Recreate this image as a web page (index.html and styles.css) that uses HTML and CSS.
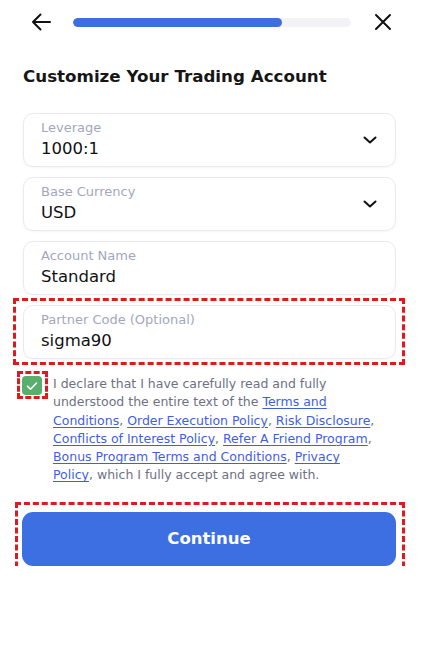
FILE: index.html
```html
<!DOCTYPE html>
<html>
<head>
<meta charset="utf-8">
<link rel="stylesheet" href="styles.css">
</head>
<body>
<div class="page">
  <header class="topbar">
    <svg class="icon back" width="20" height="18" viewBox="0 0 20 18"><path d="M19 9H2M9.5 1.5L2 9l7.5 7.5" fill="none" stroke="#111" stroke-width="2" stroke-linecap="round" stroke-linejoin="round"/></svg>
    <div class="progress"><div class="progress-fill" style="width:75%"></div></div>
    <svg class="icon close" width="18" height="18" viewBox="0 0 18 18"><path d="M2 2l14 14M16 2L2 16" fill="none" stroke="#111" stroke-width="2" stroke-linecap="round"/></svg>
  </header>
  <h1 class="title">Customize Your Trading Account</h1>
  <div class="fields">
    <div class="field">
      <div class="field-text"><span class="label">Leverage</span><span class="value">1000:1</span></div>
      <svg class="chev" width="14" height="8" viewBox="0 0 14 8"><path d="M1.5 1.5L7 6.5l5.5-5" fill="none" stroke="#111" stroke-width="2" stroke-linecap="round" stroke-linejoin="round"/></svg>
    </div>
    <div class="field">
      <div class="field-text"><span class="label">Base Currency</span><span class="value">USD</span></div>
      <svg class="chev" width="14" height="8" viewBox="0 0 14 8"><path d="M1.5 1.5L7 6.5l5.5-5" fill="none" stroke="#111" stroke-width="2" stroke-linecap="round" stroke-linejoin="round"/></svg>
    </div>
    <div class="field">
      <div class="field-text"><span class="label">Account Name</span><span class="value">Standard</span></div>
    </div>
    <div class="field marked mark-field">
      <div class="field-text"><span class="label">Partner Code (Optional)</span><span class="value">sigma90</span></div>
    </div>
  </div>
  <div class="consent">
    <div class="checkbox marked mark-check">
      <svg width="12" height="10" viewBox="0 0 12 10"><path d="M1.5 5.2l3 3L10.5 2" fill="none" stroke="#fff" stroke-width="1.6" stroke-linecap="round" stroke-linejoin="round"/></svg>
    </div>
    <p class="consent-text">I declare that I have carefully read and fully understood the entire text of the <a href="#">Terms and Conditions</a>, <a href="#">Order Execution Policy</a>, <a href="#">Risk Disclosure</a>, <a href="#">Conflicts of Interest Policy</a>, <a href="#">Refer A Friend Program</a>, <a href="#">Bonus Program Terms and Conditions</a>, <a href="#">Privacy Policy</a>, which I fully accept and agree with.</p>
  </div>
  <button class="continue marked mark-btn">Continue</button>
</div>
</body>
</html>
```
FILE: styles.css
```css
* { box-sizing: border-box; }
html, body { margin: 0; padding: 0; background: #fff; }
body { font-family: "DejaVu Sans", "Liberation Sans", sans-serif; color: #111; }
.page { width: 423px; padding: 0 27px 0 23px; }
.topbar { height: 44px; display: flex; align-items: center; gap: 0; }
.back { margin-left: 8px; flex: none; }
.progress { flex: none; margin-left: 22px; width: 278px; height: 9px; border-radius: 5px; background: #f3f3f6; overflow: hidden; }
.progress-fill { height: 100%; background: #3d6fe3; border-radius: 5px; }
.close { margin-left: 23px; flex: none; }
.title { margin: 20px 0 0 0; font-size: 16.7px; font-weight: 700; line-height: 24px; letter-spacing: 0; color: #161616; }
.fields { margin-top: 25px; display: flex; flex-direction: column; gap: 10px; }
.field { position: relative; height: 54px; border: 1px solid #e9e9f1; border-radius: 10px; display: flex; align-items: center; padding: 0 18px 0 17px; box-shadow: 0 1px 2px rgba(20,20,60,0.04); }
.field-text { flex: 1; display: flex; flex-direction: column; margin-top: -2px; }
.label { font-size: 13px; line-height: 18px; color: #a3a7bc; }
.value { font-size: 16.5px; line-height: 23px; color: #111; }
.chev { flex: none; }
.marked::after { content: ""; position: absolute; border: 3px dashed #e0191f; pointer-events: none; }
.mark-field::after { top: -8px; bottom: -7px; left: -11px; right: -10px; }
.consent { margin-top: 16px; display: flex; align-items: flex-start; }
.checkbox { position: relative; flex: none; width: 20px; height: 19px; margin-left: -1px; margin-top: 1px; border-radius: 4px; background: #5bad6e; display: flex; align-items: center; justify-content: center; }
.mark-check::after { top: -5px; bottom: -4px; left: -5px; right: -6px; }
.consent-text { margin: 0 18px 0 11px; font-size: 12.5px; line-height: 18.3px; color: #6e7183; }
.consent-text a { color: #3f5fe0; text-decoration: underline; text-underline-offset: 2px; }
.continue { position: relative; display: block; width: 374px; margin: 27px 0 0 -1px; height: 54px; border: 0; border-radius: 11px; background: #3d6fe3; color: #fff; font-family: inherit; font-size: 16.5px; font-weight: 700; }
.mark-btn::after { top: -10px; bottom: -10px; left: -7px; right: -9px; }
```
